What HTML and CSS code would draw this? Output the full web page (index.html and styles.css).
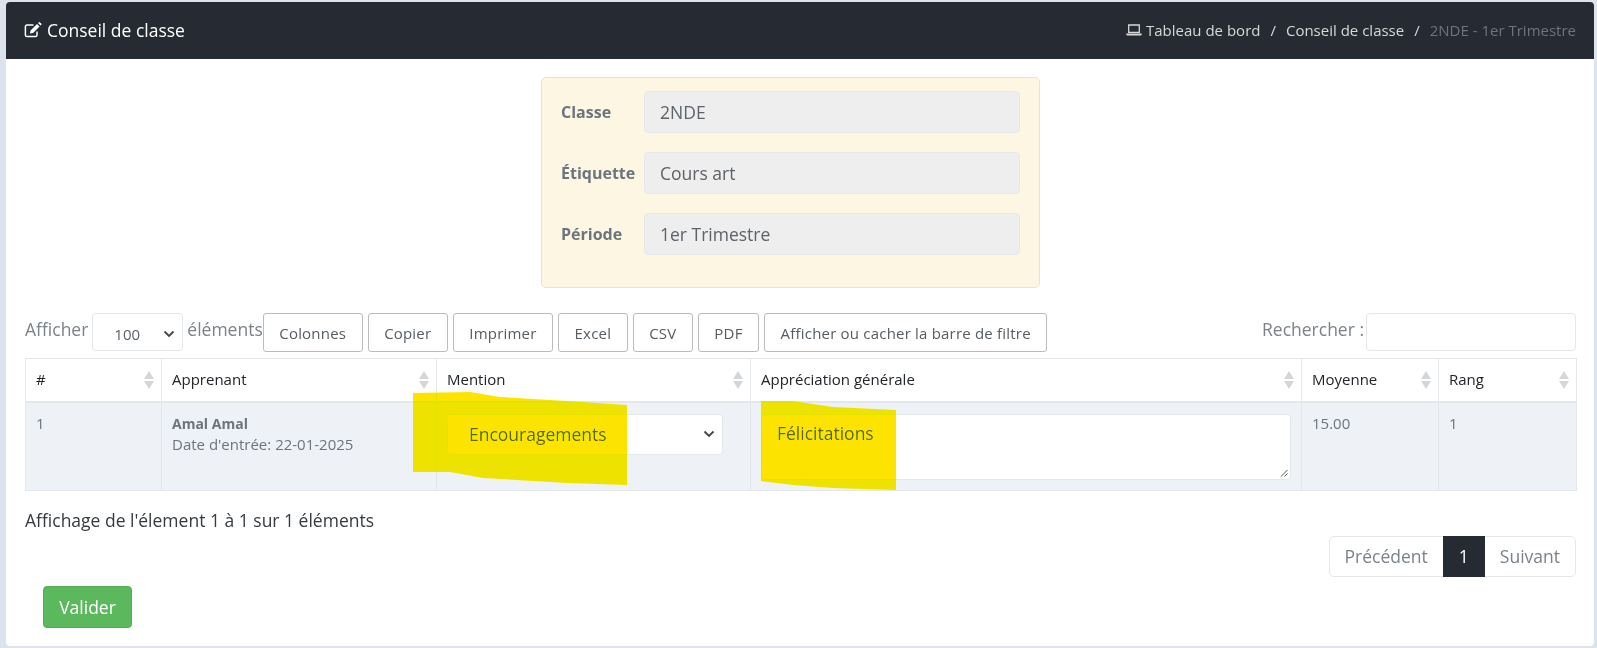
FILE: index.html
```html
<!DOCTYPE html>
<html lang="fr">
<head>
<meta charset="utf-8">
<title>Conseil de classe</title>
<link rel="stylesheet" href="styles.css">
</head>
<body>
<main class="card">
  <header class="topbar">
    <h1 class="title">
      <svg class="ico-edit" viewBox="0 0 18 16" aria-hidden="true"><path d="M13 9.500V13a1.600 1.600 0 0 1-1.600 1.600H3A1.600 1.600 0 0 1 1.400 13V4.600A1.600 1.600 0 0 1 3 3h6.500" fill="none" stroke="#fff" stroke-width="1.500"/><path d="M6.500 8.500 13 2l2.600 2.600L9.100 11l-3.100.5zM14 1l.7-.6a1 1 0 0 1 1.300 0l1.200 1.200a1 1 0 0 1 0 1.300l-.6.7z" fill="#fff"/></svg>
      Conseil de classe
    </h1>
    <nav class="crumbs">
      <svg class="ico-laptop" viewBox="0 0 16 12" aria-hidden="true"><path d="M2.700 1h10.600v7.300H2.700z" fill="none" stroke="#d8d8d8" stroke-width="1.300"/><path d="M.3 9.600h15.400v.6a1.200 1.200 0 0 1-1.200 1.200h-13a1.200 1.200 0 0 1-1.200-1.200z" fill="#d8d8d8"/></svg>
      <a class="crumb">Tableau de bord</a><span class="sep">/</span><a class="crumb">Conseil de classe</a><span class="sep">/</span><span class="crumb-current">2NDE - 1er Trimestre</span>
    </nav>
  </header>
  <section class="content">
    <form class="infos">
      <div class="info-row"><label class="info-label">Classe</label><div class="info-value">2NDE</div></div>
      <div class="info-row"><label class="info-label">Étiquette</label><div class="info-value">Cours art</div></div>
      <div class="info-row"><label class="info-label">Période</label><div class="info-value">1er Trimestre</div></div>
    </form>
    <div class="toolbar">
      <span class="tool-label">Afficher</span>
      <div class="fake-select len-select"><span>100</span><svg class="chev" viewBox="0 0 12 8"><path d="M1.500 1.500 6 6l4.500-4.500" fill="none" stroke="#444" stroke-width="1.800"/></svg></div>
      <span class="tool-label">éléments</span>
      <div class="btns">
        <button class="btn" type="button">Colonnes</button>
        <button class="btn" type="button">Copier</button>
        <button class="btn" type="button">Imprimer</button>
        <button class="btn" type="button">Excel</button>
        <button class="btn" type="button">CSV</button>
        <button class="btn" type="button">PDF</button>
        <button class="btn" type="button">Afficher ou cacher la barre de filtre</button>
      </div>
      <span class="tool-label search-label">Rechercher :</span>
      <div class="search-box"></div>
    </div>
    <table class="grid">
      <thead>
        <tr>
          <th class="c1">#<svg class="sort" viewBox="0 0 10 18"><path d="M5 0l5 8H0z"/><path d="M5 18l5-8H0z"/></svg></th>
          <th class="c2">Apprenant<svg class="sort" viewBox="0 0 10 18"><path d="M5 0l5 8H0z"/><path d="M5 18l5-8H0z"/></svg></th>
          <th class="c3">Mention<svg class="sort" viewBox="0 0 10 18"><path d="M5 0l5 8H0z"/><path d="M5 18l5-8H0z"/></svg></th>
          <th class="c4">Appréciation générale<svg class="sort" viewBox="0 0 10 18"><path d="M5 0l5 8H0z"/><path d="M5 18l5-8H0z"/></svg></th>
          <th class="c5">Moyenne<svg class="sort" viewBox="0 0 10 18"><path d="M5 0l5 8H0z"/><path d="M5 18l5-8H0z"/></svg></th>
          <th class="c6">Rang<svg class="sort" viewBox="0 0 10 18"><path d="M5 0l5 8H0z"/><path d="M5 18l5-8H0z"/></svg></th>
        </tr>
      </thead>
      <tbody>
        <tr>
          <td>1</td>
          <td><strong class="name">Amal Amal</strong><br>Date d'entrée: 22-01-2025</td>
          <td><div class="fake-select mention-select"><span>Encouragements</span><svg class="chev" viewBox="0 0 12 8"><path d="M1.500 1.500 6 6l4.500-4.500" fill="none" stroke="#444" stroke-width="1.800"/></svg></div></td>
          <td><div class="note">Félicitations<svg class="grip" viewBox="0 0 8 8"><path d="M1 7.500 7.500 1M4.500 7.500l3-3" stroke="#555" stroke-width="1"/></svg></div></td>
          <td>15.00</td>
          <td>1</td>
        </tr>
      </tbody>
    </table>
    <p class="summary">Affichage de l'élement 1 à 1 sur 1 éléments</p>
    <div class="pager-row">
      <ul class="pager">
        <li class="page">Précédent</li>
        <li class="page page-on">1</li>
        <li class="page">Suivant</li>
      </ul>
    </div>
    <button class="submit" type="button">Valider</button>
  </section>
</main>
<svg class="marker" viewBox="0 0 1597 648" aria-hidden="true">
  <polygon points="413,393 470,392 500,397 567,401 627,405 627,485 567,483 483,478 450,472 413,472"/>
  <polygon points="761,401 793,401 833,407 896,410 896,490 833,488 793,485 761,481"/>
</svg>
</body>
</html>
```
FILE: styles.css
```css
* { box-sizing: border-box; }
html, body { margin: 0; height: 100%; }
body {
  background: #dde3ec;
  font-family: "Open Sans", "Noto Sans", sans-serif;
  font-size: 15px;
  color: #6c757d;
  padding: 2px 3px 2px 6px;
  overflow: hidden;
}
.card {
  background: #fff;
  height: 644px;
  border-radius: 4px;
  overflow: hidden;
}
.topbar {
  height: 57px;
  background: #262a33;
  display: flex;
  align-items: center;
  justify-content: space-between;
  padding: 0 18px 2px;
}
.title {
  margin: 0;
  font-size: 17.500px;
  font-weight: 400;
  color: #fff;
  display: flex;
  align-items: center;
  gap: 5px;
}
.ico-edit { width: 18px; height: 16px; }
.crumbs { display: flex; align-items: center; font-size: 15px; color: #d8d8d8; }
.ico-laptop { width: 16px; height: 12px; margin-right: 4px; }
.sep { padding: 0 10px; }
.crumb-current { color: #6c757d; }

.content { padding: 18px 18px 0 19px; }
.infos {
  width: 499px;
  height: 211px;
  margin-left: 516px;
  background: #fdf6e3;
  border: 1px solid #e4e2da;
  border-radius: 5px;
  padding: 13px 19px 0;
}
.info-row { display: flex; align-items: center; height: 42px; margin-bottom: 19px; }
.info-label { width: 83px; font-weight: 700; font-size: 16px; }
.info-value {
  flex: 1;
  height: 42px;
  background: #eee;
  border: 1px solid #e6e8ea;
  border-radius: 4px;
  padding: 0 15px;
  font-size: 17.500px;
  line-height: 40px;
  color: #5c6268;
}

.toolbar { display: flex; align-items: flex-start; margin-top: 25px; height: 39px; font-size: 17.500px; }
.tool-label { line-height: 32px; color: #7b8289; }
.fake-select {
  display: flex;
  align-items: center;
  justify-content: space-between;
  background: #fff;
  border: 1px solid #e4e7ea;
  border-radius: 4px;
  color: #5c6268;
}
.chev { width: 12px; height: 8px; }
.len-select { width: 91px; height: 38px; margin: 0 4px 0 4px; padding: 4px 7px 0 21px; font-size: 15px; }
.btns { display: flex; gap: 5px; }
.btn {
  height: 39px;
  padding: 0 15.500px;
  background: #fff;
  border: 1px solid #bbb;
  border-radius: 3px;
  font-family: inherit;
  font-size: 15px;
  letter-spacing: .2px;
  color: #555c62;
}
.search-label { margin-left: auto; margin-right: 2px; }
.search-box { width: 210px; height: 38px; background: #fff; border: 1px solid #e4e7ea; border-radius: 4px; }

.grid { width: 1551px; margin-top: 6px; border-collapse: collapse; table-layout: fixed; }
.grid th, .grid td { border: 1px solid #e3e6ea; padding: 0 10px; vertical-align: top; }
.grid th {
  position: relative;
  height: 43px;
  border-bottom-width: 2px;
  font-weight: 400;
  color: #212529;
  text-align: left;
  line-height: 40px;
}
.grid td { height: 89px; padding-top: 10px; background: #eef1f5; line-height: 21px; }
.c1 { width: 136px; }
.c2 { width: 275px; }
.c3 { width: 314px; }
.c4 { width: 551px; }
.c5 { width: 137px; }
.c6 { width: 138px; }
.sort { position: absolute; right: 7px; top: 12px; width: 10px; height: 18px; fill: #d4d6d8; }
.name { font-weight: 700; font-size: 14px; }
.mention-select { width: 276px; height: 41px; margin-top: 1px; padding: 0 7px 0 21px; font-size: 17.500px; }
.note {
  position: relative;
  width: 530px;
  height: 66px;
  margin-top: 1px;
  background: #fff;
  border: 1px solid #e4e7ea;
  border-radius: 4px;
  padding: 6px 15px;
  font-size: 17.500px;
  line-height: 24px;
  color: #5c6268;
}
.grip { position: absolute; right: 2px; bottom: 2px; width: 8px; height: 8px; }

.summary { margin: 17px 0 0; font-size: 17.500px; line-height: 24px; color: #343a40; }
.pager-row { display: flex; justify-content: flex-end; margin-top: 4px; }
.pager { display: flex; list-style: none; margin: 0; padding: 0; border: 1px solid #e4e7ea; border-radius: 5px; height: 41px; font-size: 17.500px; }
.page { padding: 0 15px; line-height: 39px; color: #7b8289; }
.page-on { width: 42px; height: 41px; margin-top: -1px; padding: 0; background: #262a33; color: #fff; text-align: center; line-height: 41px; }
.submit {
  display: block;
  width: 89px;
  height: 42px;
  margin: 9px 0 0 18px;
  background: #5cb85c;
  border: 1px solid #54ad54;
  border-radius: 4px;
  font-family: inherit;
  font-size: 17.500px;
  color: #fff;
}
.marker {
  position: absolute;
  left: 0;
  top: 0;
  width: 1597px;
  height: 648px;
  fill: #fde300;
  mix-blend-mode: darken;
  pointer-events: none;
}
```
